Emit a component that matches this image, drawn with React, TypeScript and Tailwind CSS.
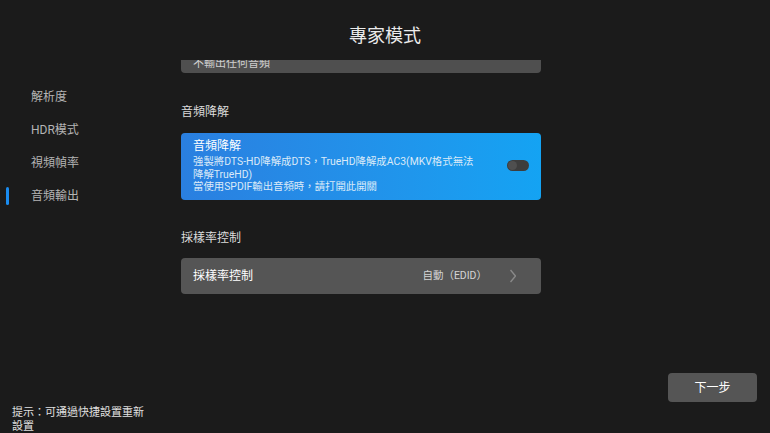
import React from "react";

const font = { fontFamily: "Roboto, 'Noto Sans CJK TC', sans-serif" };

const navItems = ["解析度", "HDR模式", "視頻幀率", "音頻輸出"];

export default function App() {
  return (
    <div
      className="flex h-[433px] w-[770px] flex-col overflow-hidden bg-[#1b1b1b] text-white"
      style={font}
    >
      {/* Header */}
      <div className="flex h-[60px] shrink-0 justify-center pt-[25px]">
        <h1 className="text-[18px] leading-[22px] text-[#ececec]">專家模式</h1>
      </div>

      <div className="flex flex-1">
        {/* Sidebar */}
        <div className="flex w-[181px] shrink-0 flex-col justify-between">
          <ul className="pt-[20px]">
            {navItems.map((item, i) => (
              <li
                key={item}
                className="relative flex h-[33px] items-center pl-[31px] text-[12px] text-[#b4b4b4]"
              >
                {i === navItems.length - 1 && (
                  <span className="absolute left-[6px] top-[8px] h-[18px] w-[3px] rounded-sm bg-[#1a8cf0]" />
                )}
                {item}
              </li>
            ))}
          </ul>
          <p className="-mb-[1px] w-[152px] pl-[12px] text-[11px] leading-[14px] text-[#e0e0e0]">
            提示：可通過快捷設置重新設置
          </p>
        </div>

        {/* Settings list */}
        <div className="w-[360px] shrink-0 overflow-hidden">
          <div className="-mt-[26px] rounded-[4px] bg-[#4f4f4f] px-[12px] pb-[3px] pt-[23px]">
            <div className="text-[11px] leading-[13px] text-[#cfcfcf]">不輸出任何音頻</div>
          </div>

          <div className="mt-[30px] text-[12px] leading-[18px] text-[#dcdcdc]">音頻降解</div>

          <div className="mt-[12px] flex items-center justify-between rounded-[4px] bg-gradient-to-r from-[#2a7fe0] to-[#14a3f3] px-[12px] pb-[6px] pt-[5px]">
            <div>
              <div className="text-[12px] leading-[16px] text-white">音頻降解</div>
              <div className="mt-[2px] text-[10.4px] leading-[12.5px] text-[#dbeaf8]">
                強製將DTS-HD降解成DTS，TrueHD降解成AC3(MKV格式無法
                <br />
                降解TrueHD)
                <br />
                當使用SPDIF輸出音頻時，請打開此開關
              </div>
            </div>
            <span className="flex h-[11px] w-[22px] items-center rounded-full bg-[#3d3d3d] px-[1px]">
              <span className="h-[9px] w-[9px] rounded-full bg-[#4f4f4f]" />
            </span>
          </div>

          <div className="mt-[29px] text-[12px] leading-[18px] text-[#dcdcdc]">採樣率控制</div>

          <div className="mt-[11px] flex h-[36px] items-center rounded-[4px] bg-[#555555] pl-[12px] pr-[25px]">
            <span className="flex-1 text-[12px] text-white">採樣率控制</span>
            <span className="text-[10.5px] text-[#d4d4d4]">自動（EDID）</span>
            <svg
              className="ml-[23px]"
              width="6"
              height="14"
              viewBox="0 0 6 14"
              fill="none"
              stroke="#8a8a8a"
              strokeWidth="1.4"
            >
              <path d="M0.5 1l5 6-5 6" />
            </svg>
          </div>
        </div>

        {/* Right column */}
        <div className="flex flex-1 flex-col items-end justify-end pb-[31px] pr-[13px]">
          <button className="h-[29px] w-[89px] rounded-[4px] bg-[#555555] text-[12px] text-white">
            下一步
          </button>
        </div>
      </div>
    </div>
  );
}
